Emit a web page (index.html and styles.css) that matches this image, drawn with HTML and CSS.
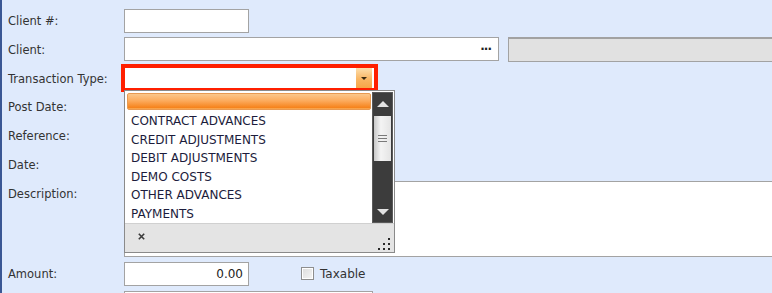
FILE: index.html
```html
<!DOCTYPE html>
<html lang="en">
<head>
    <meta charset="UTF-8">
    <title>Transaction Entry</title>
    <link rel="stylesheet" href="styles.css">
</head>
<body>
    <div class="window">
        <div class="form">
            <div class="row">
                <label class="label">Client #:</label>
                <div class="input w-short"></div>
            </div>
            <div class="row">
                <label class="label">Client:</label>
                <div class="input w-client">
                    <span class="ellipsis">&middot;&middot;&middot;</span>
                </div>
                <div class="readonly"></div>
            </div>
            <div class="row">
                <label class="label">Transaction Type:</label>
                <div class="combo highlight">
                    <span class="combo-btn"><span class="arrow-down"></span></span>
                </div>
            </div>
            <div class="row">
                <label class="label">Post Date:</label>
                <div class="input w-short"></div>
            </div>
            <div class="row">
                <label class="label">Reference:</label>
                <div class="input w-short"></div>
            </div>
            <div class="row">
                <label class="label">Date:</label>
                <div class="input w-short"></div>
            </div>
            <div class="row row-tall">
                <label class="label">Description:</label>
                <div class="textarea"></div>
            </div>
            <div class="row">
                <label class="label">Amount:</label>
                <div class="input w-short num">0.00</div>
                <span class="checkbox"></span>
                <span class="check-label">Taxable</span>
            </div>
            <div class="row">
                <label class="label"></label>
                <div class="input w-mid"></div>
            </div>
        </div>

        <!-- open list of the Transaction Type combo -->
        <div class="dropdown">
            <div class="dd-body">
                <div class="dd-list">
                    <div class="dd-item selected"></div>
                    <div class="dd-items">
                        <div class="dd-item">CONTRACT ADVANCES</div>
                        <div class="dd-item">CREDIT ADJUSTMENTS</div>
                        <div class="dd-item">DEBIT ADJUSTMENTS</div>
                        <div class="dd-item">DEMO COSTS</div>
                        <div class="dd-item">OTHER ADVANCES</div>
                        <div class="dd-item">PAYMENTS</div>
                    </div>
                </div>
                <div class="scrollbar">
                    <div class="sb-btn"><span class="sb-up"></span></div>
                    <div class="sb-thumb"><span></span><span></span><span></span></div>
                    <div class="sb-track"></div>
                    <div class="sb-btn"><span class="sb-down"></span></div>
                </div>
            </div>
            <div class="dd-foot">
                <svg class="clear" width="7" height="7" viewBox="0 0 7 7">
                    <path d="M0.8 0.8 L6.2 6.2 M6.2 0.8 L0.8 6.2" stroke="#3a3a3a" stroke-width="1.6"/>
                </svg>
                <svg class="grip" width="13" height="13" viewBox="0 0 13 13">
                    <rect x="10" y="0" width="2" height="2" fill="#2a2a2a"/>
                    <rect x="5" y="5" width="2" height="2" fill="#2a2a2a"/>
                    <rect x="10" y="5" width="2" height="2" fill="#2a2a2a"/>
                    <rect x="0" y="10" width="2" height="2" fill="#2a2a2a"/>
                    <rect x="5" y="10" width="2" height="2" fill="#2a2a2a"/>
                    <rect x="10" y="10" width="2" height="2" fill="#2a2a2a"/>
                </svg>
            </div>
        </div>
    </div>
</body>
</html>
```

FILE: styles.css
```css
body {
    margin: 0;
    background-color: #dfeafc;
    font-family: 'DejaVu Sans', Verdana, sans-serif;
    font-size: 11.5px;
    color: #1e1e2e;
    overflow: hidden;
}
.window {
    position: relative;
    height: 293px;
    border-left: 2px solid #3a5794;
    overflow: hidden;
}
.form {
    display: flex;
    flex-direction: column;
    gap: 4.75px;
    padding: 8.5px 0 0 6px;
}
.row {
    display: flex;
    align-items: center;
    height: 24px;
}
.row-tall {
    height: 76px;
    align-items: flex-start;
}
.label {
    width: 116px;
    flex: none;
    line-height: 24px;
    padding-top: 1px;
    color: #333;
}
.input {
    box-sizing: border-box;
    height: 24px;
    border: 1px solid #a3a3a3;
    background-color: #fff;
    flex: none;
    display: flex;
    align-items: center;
}
.w-short { width: 125px; }
.w-mid { width: 249px; }
.w-client {
    width: 375px;
    justify-content: flex-end;
}
.ellipsis {
    font-weight: bold;
    font-size: 12px;
    letter-spacing: -1px;
    margin-right: 7px;
    color: #222;
}
.num {
    justify-content: flex-end;
    padding-right: 5px;
    font-size: 12px;
    color: #222;
}
.readonly {
    box-sizing: border-box;
    height: 25px;
    margin-left: 9px;
    width: 300px;
    flex: none;
    background-color: #e1e1e1;
    border-top: 2px solid #a2a2a2;
    border-bottom: 1px solid #a2a2a2;
    border-left: 1px solid #a2a2a2;
}
.combo {
    box-sizing: border-box;
    width: 251px;
    height: 22px;
    background-color: #fff;
    display: flex;
    justify-content: flex-end;
}
.highlight {
    outline: 4px solid #ff1f00;
    outline-offset: -1px;
}
.combo-btn {
    width: 16px;
    height: 22px;
    background: linear-gradient(to bottom, #fde2b4, #f9b663 55%, #f6a445);
    display: flex;
    align-items: center;
    justify-content: center;
    margin-right: 3px;
}
.arrow-down {
    width: 0;
    height: 0;
    border-left: 3px solid transparent;
    border-right: 3px solid transparent;
    border-top: 3px solid #3a2a10;
}
.textarea {
    box-sizing: border-box;
    height: 76px;
    width: 700px;
    flex: none;
    background-color: #fff;
    border: 1px solid #a3a3a3;
}
.checkbox {
    box-sizing: border-box;
    width: 13px;
    height: 13px;
    margin-left: 52px;
    border: 1px solid #8e8e8e;
    background: linear-gradient(135deg, #dcdcdc, #f6f6f6);
    box-shadow: inset 0 0 0 1px #fff;
}
.check-label {
    margin-left: 6px;
    font-size: 12px;
    color: #333;
}

/* dropdown list */
.dropdown {
    position: absolute;
    left: 122px;
    top: 90px;
    width: 271px;
    height: 163px;
    box-sizing: border-box;
    border: 1px solid #8a8a8a;
    background-color: #fff;
    display: flex;
    flex-direction: column;
}
.dd-body {
    flex: 1;
    display: flex;
    padding: 2px 1px 0 2px;
    min-height: 0;
}
.dd-list {
    flex: 1;
    font-size: 12px;
    color: #1c1c3c;
}
.dd-item {
    height: 18.6px;
    line-height: 18.6px;
    padding-left: 4px;
    white-space: nowrap;
}
.dd-item.selected {
    box-sizing: border-box;
    height: 17px;
    margin-right: 1px;
    border: 1px solid #e79a52;
    border-radius: 2px;
    background: linear-gradient(to bottom, #fbc78c, #fcab5d 45%, #f6841d 90%, #fbb25e);
}
.dd-items {
    padding-top: 2px;
}
.scrollbar {
    width: 21px;
    flex: none;
    margin-top: -1px;
    background-color: #3c3c3c;
    border: 1px solid #5a5a5a;
    box-sizing: border-box;
    display: flex;
    flex-direction: column;
}
.sb-btn {
    height: 21px;
    display: flex;
    align-items: center;
    justify-content: center;
}
.sb-up, .sb-down {
    width: 0;
    height: 0;
    border-left: 6px solid transparent;
    border-right: 6px solid transparent;
}
.sb-up { border-bottom: 6px solid #e2e2e2; }
.sb-down { border-top: 6px solid #e2e2e2; }
.sb-thumb {
    height: 45px;
    margin: 2px 1px 0;
    background: linear-gradient(to right, #c8c8c8, #f4f4f4 40%, #e4e4e4);
    display: flex;
    flex-direction: column;
    align-items: center;
    justify-content: center;
    gap: 2px;
}
.sb-thumb span {
    width: 9px;
    height: 1px;
    background-color: #7a7a7a;
}
.sb-track {
    flex: 1;
}
.dd-foot {
    height: 28px;
    flex: none;
    background-color: #e4e4e4;
    border-top: 1px solid #d0d0d0;
    position: relative;
}
.clear {
    position: absolute;
    left: 13px;
    top: 9px;
}
.grip {
    position: absolute;
    right: 3px;
    bottom: 1px;
}
```
